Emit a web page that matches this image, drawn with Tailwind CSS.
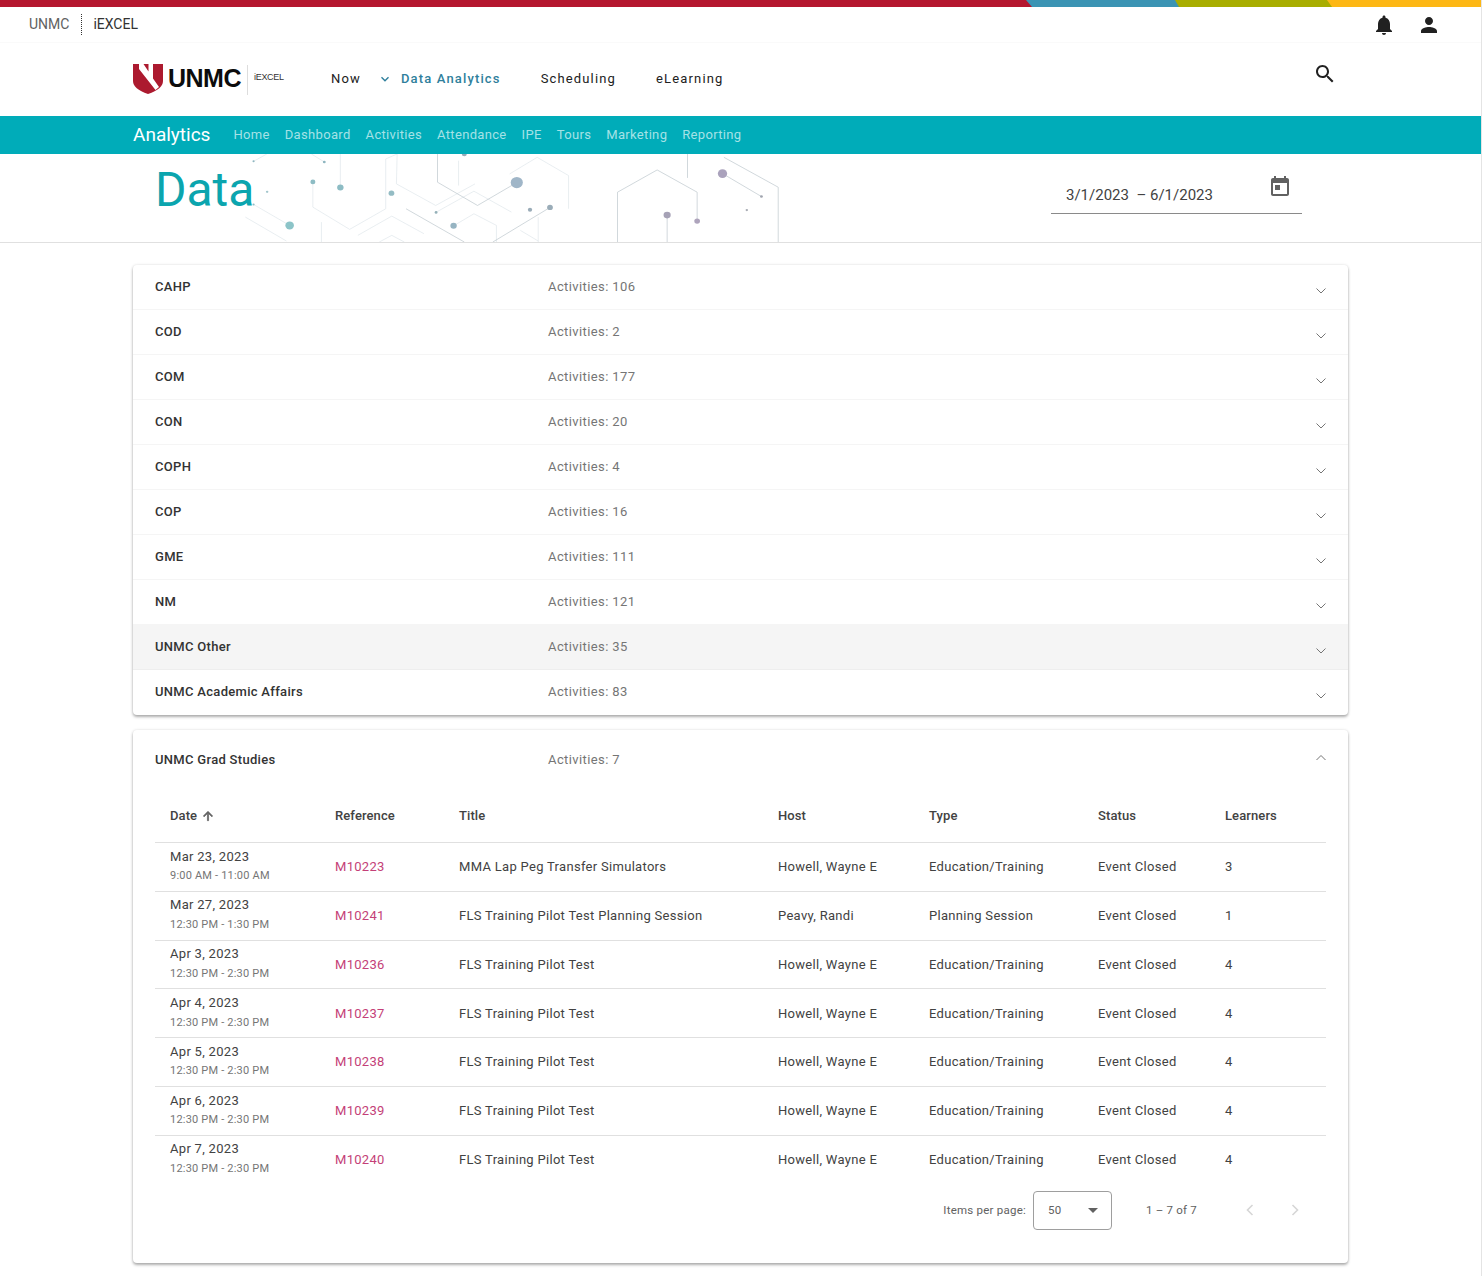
<!DOCTYPE html>
<html lang="en">
<head>
<meta charset="utf-8">
<title>Data</title>
<script src="https://cdn.jsdelivr.net/npm/@tailwindcss/browser@4"></script>
</head>
<body class="bg-white font-['Roboto',sans-serif] text-[#212121]">
<div class="h-[1276px] overflow-hidden border-r border-[#e4e4e4]">
  <svg class="block w-full h-[7px]" viewBox="0 0 1481 7" preserveAspectRatio="none"><rect width="1481" height="7" fill="#fdb714"/><polygon points="0,0 1327,0 1332,7 0,7" fill="#a8ad00"/><polygon points="0,0 1175,0 1179,7 0,7" fill="#3b94b4"/><polygon points="0,0 1026,0 1032,7 0,7" fill="#b5172f"/></svg>

  <header class="h-[36px] flex items-center border-b border-[#fafafa] pl-[29px] pr-[40px] text-[14px]">
    <span class="text-[#616161] leading-none pb-[2px]">UNMC</span>
    <span class="h-[21px] ml-[12px] mr-[11px] border-l border-dotted border-[#333]"></span>
    <span class="text-[#333] leading-none pb-[2px]">iEXCEL</span>
    <div class="ml-auto flex items-center gap-[21px]">
      <svg class="w-[24px] h-[24px]" viewBox="0 0 24 24" fill="#212121"><path d="M12 22c1.1 0 2-.9 2-2h-4c0 1.1.89 2 2 2zm6-6v-5c0-3.07-1.64-5.64-4.5-6.32V4c0-.83-.67-1.5-1.5-1.5s-1.5.67-1.5 1.5v.68C7.63 5.36 6 7.92 6 11v5l-2 2v1h16v-1l-2-2z"/></svg>
      <svg class="w-[24px] h-[24px]" viewBox="0 0 24 24" fill="#212121"><path d="M12 12c2.21 0 4-1.79 4-4s-1.79-4-4-4-4 1.79-4 4 1.79 4 4 4zm0 2c-2.67 0-8 1.34-8 4v2h16v-2c0-2.66-5.33-4-8-4z"/></svg>
    </div>
  </header>

  <nav class="h-[73px] flex items-center pl-[133px] pr-[144px] relative">
    <svg class="w-[30px] h-[30px] mt-[-1px]" viewBox="0 0 30 30"><path d="M0 0H30V17Q30 25 15 30Q0 25 0 17Z" fill="#ac1a2f"/><path d="M6 0H10.5L15.5 7.5V0H20V14.5L26 23 22.5 26 6 5Z" fill="#fff"/></svg>
    <span class="ml-[5px] mb-[2px] font-['Liberation_Sans',sans-serif] font-bold text-[25px] tracking-[-0.5px] text-[#0c0c0c] leading-none">UNMC</span>
    <span class="h-[30px] ml-[6px] border-l border-[#ddd]"></span>
    <span class="ml-[6px] mb-[3px] font-['Liberation_Sans',sans-serif] text-[9px] tracking-[-0.3px] text-[#333] w-[30px]">iEXCEL</span>
    <div class="flex items-center text-[13px] tracking-[1.15px] ml-[47px] mb-[2px]">
      <span class="text-[#212121]">Now</span>
      <svg class="w-[10px] h-[10px] ml-[19px] mr-[11px]" viewBox="0 0 10 10" fill="none" stroke="#2f7f9c" stroke-width="1.4"><path d="M1.5 3.2 5 6.7 8.5 3.2"/></svg>
      <span class="text-[#2f7f9c] font-medium">Data Analytics</span>
      <span class="ml-[40px] text-[#212121]">Scheduling</span>
      <span class="ml-[40px] text-[#212121]">eLearning</span>
    </div>
    <svg class="ml-auto w-[24px] h-[24px] mt-[-12px]" viewBox="0 0 24 24" fill="#212121"><path d="M15.5 14h-.79l-.28-.27C15.41 12.59 16 11.11 16 9.5 16 5.91 13.09 3 9.5 3S3 5.91 3 9.5 5.91 16 9.5 16c1.61 0 3.09-.59 4.23-1.57l.27.28v.79l5 4.99L20.49 19l-4.99-5zm-6 0C7.01 14 5 11.99 5 9.5S7.01 5 9.5 5 14 7.01 14 9.5 11.99 14 9.5 14z"/></svg>
  </nav>

  <div class="h-[38px] bg-[#00acb9] flex items-center pl-[133px] text-[13px] tracking-[0.33px] text-[#a5e2e6] gap-[15px]">
    <span class="text-white text-[19px] tracking-normal mr-[8px]">Analytics</span>
    <span>Home</span><span>Dashboard</span><span>Activities</span><span>Attendance</span><span>IPE</span><span>Tours</span><span>Marketing</span><span>Reporting</span>
  </div>

  <section class="h-[89px] relative border-b border-[#e0e0e0] flex items-center pl-[155px] pr-[179px]">
    <svg class="absolute left-[240px] top-0 w-[560px] h-[88px]" viewBox="0 0 1568 265" preserveAspectRatio="none" fill="none" stroke-width="2">
      <g stroke="#dfe6ea">
        <path d="M38 22 75 0M200 0 236 24M281 0V101M15 190 130 262M330 245 425 187 515 240M390 265 425 245 460 265M228 205V265M440 0 438 90 548 155 658 90M612 20V95M548 176 655 112 760 175M785 230 835 262M835 190V265M718 265V215L655 180 600 215"/>
        <path d="M204 84V160L307 227 408 165V15L440 0M755 60 832 10 920 65V165M38 152 139 215"/>
      </g>
      <g stroke="#bcc6cc">
        <path d="M553 0V85L665 155 775 86M465 165 628 265M708 265 868 161"/>
        <path d="M1057 265V115L1168 48 1280 115V202M1253 0V72M1355 10 1507 100V265M1351 59 1460 128M1196 184V265"/>
      </g>
      <g stroke="none">
        <circle cx="38" cy="22" r="3" fill="#8fb6c0"/><circle cx="236" cy="24" r="4" fill="#8fb6c0"/><circle cx="204" cy="84" r="7" fill="#8dbcc4"/><circle cx="281" cy="101" r="9" fill="#8dbcc4"/><circle cx="76" cy="114" r="3.5" fill="#a2c6cc"/><circle cx="38" cy="152" r="3" fill="#8dbcc4"/><circle cx="139" cy="215" r="12" fill="#8cc4c8"/><circle cx="424" cy="118" r="8" fill="#94bcc4"/><circle cx="775" cy="86" r="17" fill="#a0b6c8"/><circle cx="812" cy="168" r="6" fill="#9aacb8"/><circle cx="868" cy="161" r="8" fill="#9aacb8"/><circle cx="549" cy="176" r="4" fill="#94b0b8"/><circle cx="598" cy="216" r="9" fill="#96b4c2"/><circle cx="628" cy="0" r="7" fill="#96aab8"/>
        <circle cx="1351" cy="59" r="13" fill="#aaa2bc"/><circle cx="1460" cy="128" r="4" fill="#a0a4ae"/><circle cx="1419" cy="169" r="3.5" fill="#a8acb4"/><circle cx="1196" cy="184" r="10" fill="#a6a2b6"/><circle cx="1280" cy="202" r="8" fill="#aea4bc"/>
      </g>
    </svg>
    <h1 class="relative text-[48px] font-normal text-[#0ba5ae] leading-none mb-[16px]">Data</h1>
    <div class="ml-auto relative w-[251px] h-[60px] border-b border-[#8a8a8a] mb-[7px] flex items-end pl-[15px] pb-[6px] text-[15px] text-[#424242] mt-[-22px]">
      <span>3/1/2023&nbsp; –&nbsp;6/1/2023</span>
      <svg class="absolute right-[10px] top-[21px] w-[24px] h-[24px]" viewBox="0 0 24 24" fill="#616161"><path d="M19 3h-1V1h-2v2H8V1H6v2H5c-1.11 0-1.99.9-1.99 2L3 19c0 1.1.89 2 2 2h14c1.1 0 2-.9 2-2V5c0-1.1-.9-2-2-2zm0 16H5V8h14v11zM7 10h5v5H7z"/></svg>
    </div>
  </section>

  <main class="pl-[133px] pr-[133px] pt-[22px] text-[13px] tracking-[0.3px]">
    <div class="rounded-[4px] bg-white shadow-[0_2px_3px_rgba(0,0,0,0.3),0_0_3px_rgba(0,0,0,0.12)]">
      <div class="h-[45px] flex items-center pl-[22px] pr-[21px] border-b border-[#f5f5f5] font-medium"><span class="w-[393px] text-[#333]">CAHP</span><span class="text-[#757575] font-normal tracking-[0.4px]">Activities: 106</span><svg class="ml-auto w-[12px] h-[12px] mt-[7px]" viewBox="0 0 12 12" fill="none" stroke="#757575" stroke-width="1"><path d="M1.5 3.5 6 8 10.5 3.5"/></svg></div>
      <div class="h-[45px] flex items-center pl-[22px] pr-[21px] border-b border-[#f5f5f5] font-medium"><span class="w-[393px] text-[#333]">COD</span><span class="text-[#757575] font-normal tracking-[0.4px]">Activities: 2</span><svg class="ml-auto w-[12px] h-[12px] mt-[7px]" viewBox="0 0 12 12" fill="none" stroke="#757575" stroke-width="1"><path d="M1.5 3.5 6 8 10.5 3.5"/></svg></div>
      <div class="h-[45px] flex items-center pl-[22px] pr-[21px] border-b border-[#f5f5f5] font-medium"><span class="w-[393px] text-[#333]">COM</span><span class="text-[#757575] font-normal tracking-[0.4px]">Activities: 177</span><svg class="ml-auto w-[12px] h-[12px] mt-[7px]" viewBox="0 0 12 12" fill="none" stroke="#757575" stroke-width="1"><path d="M1.5 3.5 6 8 10.5 3.5"/></svg></div>
      <div class="h-[45px] flex items-center pl-[22px] pr-[21px] border-b border-[#f5f5f5] font-medium"><span class="w-[393px] text-[#333]">CON</span><span class="text-[#757575] font-normal tracking-[0.4px]">Activities: 20</span><svg class="ml-auto w-[12px] h-[12px] mt-[7px]" viewBox="0 0 12 12" fill="none" stroke="#757575" stroke-width="1"><path d="M1.5 3.5 6 8 10.5 3.5"/></svg></div>
      <div class="h-[45px] flex items-center pl-[22px] pr-[21px] border-b border-[#f5f5f5] font-medium"><span class="w-[393px] text-[#333]">COPH</span><span class="text-[#757575] font-normal tracking-[0.4px]">Activities: 4</span><svg class="ml-auto w-[12px] h-[12px] mt-[7px]" viewBox="0 0 12 12" fill="none" stroke="#757575" stroke-width="1"><path d="M1.5 3.5 6 8 10.5 3.5"/></svg></div>
      <div class="h-[45px] flex items-center pl-[22px] pr-[21px] border-b border-[#f5f5f5] font-medium"><span class="w-[393px] text-[#333]">COP</span><span class="text-[#757575] font-normal tracking-[0.4px]">Activities: 16</span><svg class="ml-auto w-[12px] h-[12px] mt-[7px]" viewBox="0 0 12 12" fill="none" stroke="#757575" stroke-width="1"><path d="M1.5 3.5 6 8 10.5 3.5"/></svg></div>
      <div class="h-[45px] flex items-center pl-[22px] pr-[21px] border-b border-[#f5f5f5] font-medium"><span class="w-[393px] text-[#333]">GME</span><span class="text-[#757575] font-normal tracking-[0.4px]">Activities: 111</span><svg class="ml-auto w-[12px] h-[12px] mt-[7px]" viewBox="0 0 12 12" fill="none" stroke="#757575" stroke-width="1"><path d="M1.5 3.5 6 8 10.5 3.5"/></svg></div>
      <div class="h-[45px] flex items-center pl-[22px] pr-[21px] border-b border-[#f5f5f5] font-medium"><span class="w-[393px] text-[#333]">NM</span><span class="text-[#757575] font-normal tracking-[0.4px]">Activities: 121</span><svg class="ml-auto w-[12px] h-[12px] mt-[7px]" viewBox="0 0 12 12" fill="none" stroke="#757575" stroke-width="1"><path d="M1.5 3.5 6 8 10.5 3.5"/></svg></div>
      <div class="h-[45px] flex items-center pl-[22px] pr-[21px] border-b border-[#eeeeee] bg-[#f5f5f5] font-medium"><span class="w-[393px] text-[#333]">UNMC Other</span><span class="text-[#757575] font-normal tracking-[0.4px]">Activities: 35</span><svg class="ml-auto w-[12px] h-[12px] mt-[7px]" viewBox="0 0 12 12" fill="none" stroke="#757575" stroke-width="1"><path d="M1.5 3.5 6 8 10.5 3.5"/></svg></div>
      <div class="h-[45px] flex items-center pl-[22px] pr-[21px] pb-[2px] font-medium"><span class="w-[393px] text-[#333]">UNMC Academic Affairs</span><span class="text-[#757575] font-normal tracking-[0.4px]">Activities: 83</span><svg class="ml-auto w-[12px] h-[12px] mt-[9px]" viewBox="0 0 12 12" fill="none" stroke="#757575" stroke-width="1"><path d="M1.5 3.5 6 8 10.5 3.5"/></svg></div>
    </div>

    <div class="mt-[15px] h-[533px] rounded-[4px] bg-white shadow-[0_2px_3px_rgba(0,0,0,0.3),0_0_3px_rgba(0,0,0,0.12)] px-[22px]">
      <div class="h-[59px] flex items-center font-medium"><span class="w-[393px] text-[#333]">UNMC Grad Studies</span><span class="text-[#757575] font-normal tracking-[0.4px]">Activities: 7</span><svg class="ml-auto mr-[-1px] w-[12px] h-[12px] mt-[-3px]" viewBox="0 0 12 12" fill="none" stroke="#757575" stroke-width="1"><path d="M1.5 8 6 3.5 10.5 8"/></svg></div>
      <div class="h-[53px] grid grid-cols-[165px_124px_319px_151px_169px_127px_1fr] items-center pl-[15px] font-medium tracking-[0.1px] text-[#424242]">
        <span class="flex items-center">Date<svg class="w-[14px] h-[14px] ml-[4px]" viewBox="0 0 24 24" fill="#616161" stroke="#616161" stroke-width="1.2"><path d="M4 12l1.41 1.41L11 7.83V20h2V7.83l5.58 5.59L20 12l-8-8-8 8z"/></svg></span><span>Reference</span><span>Title</span><span>Host</span><span>Type</span><span>Status</span><span>Learners</span>
      </div>
      <div class="h-[48.8px] border-t border-[#e0e0e0] grid grid-cols-[165px_124px_319px_151px_169px_127px_1fr] items-center pl-[15px] text-[#424242]"><div class="leading-[19.5px] mt-[-1.5px]"><div>Mar 23, 2023</div><div class="text-[11px] tracking-[0.2px] text-[#757575]">9:00 AM - 11:00 AM</div></div><span class="text-[#c43f78]">M10223</span><span>MMA Lap Peg Transfer Simulators</span><span>Howell, Wayne E</span><span>Education/Training</span><span>Event Closed</span><span>3</span></div>
      <div class="h-[48.8px] border-t border-[#e0e0e0] grid grid-cols-[165px_124px_319px_151px_169px_127px_1fr] items-center pl-[15px] text-[#424242]"><div class="leading-[19.5px] mt-[-1.5px]"><div>Mar 27, 2023</div><div class="text-[11px] tracking-[0.2px] text-[#757575]">12:30 PM - 1:30 PM</div></div><span class="text-[#c43f78]">M10241</span><span>FLS Training Pilot Test Planning Session</span><span>Peavy, Randi</span><span>Planning Session</span><span>Event Closed</span><span>1</span></div>
      <div class="h-[48.8px] border-t border-[#e0e0e0] grid grid-cols-[165px_124px_319px_151px_169px_127px_1fr] items-center pl-[15px] text-[#424242]"><div class="leading-[19.5px] mt-[-1.5px]"><div>Apr 3, 2023</div><div class="text-[11px] tracking-[0.2px] text-[#757575]">12:30 PM - 2:30 PM</div></div><span class="text-[#c43f78]">M10236</span><span>FLS Training Pilot Test</span><span>Howell, Wayne E</span><span>Education/Training</span><span>Event Closed</span><span>4</span></div>
      <div class="h-[48.8px] border-t border-[#e0e0e0] grid grid-cols-[165px_124px_319px_151px_169px_127px_1fr] items-center pl-[15px] text-[#424242]"><div class="leading-[19.5px] mt-[-1.5px]"><div>Apr 4, 2023</div><div class="text-[11px] tracking-[0.2px] text-[#757575]">12:30 PM - 2:30 PM</div></div><span class="text-[#c43f78]">M10237</span><span>FLS Training Pilot Test</span><span>Howell, Wayne E</span><span>Education/Training</span><span>Event Closed</span><span>4</span></div>
      <div class="h-[48.8px] border-t border-[#e0e0e0] grid grid-cols-[165px_124px_319px_151px_169px_127px_1fr] items-center pl-[15px] text-[#424242]"><div class="leading-[19.5px] mt-[-1.5px]"><div>Apr 5, 2023</div><div class="text-[11px] tracking-[0.2px] text-[#757575]">12:30 PM - 2:30 PM</div></div><span class="text-[#c43f78]">M10238</span><span>FLS Training Pilot Test</span><span>Howell, Wayne E</span><span>Education/Training</span><span>Event Closed</span><span>4</span></div>
      <div class="h-[48.8px] border-t border-[#e0e0e0] grid grid-cols-[165px_124px_319px_151px_169px_127px_1fr] items-center pl-[15px] text-[#424242]"><div class="leading-[19.5px] mt-[-1.5px]"><div>Apr 6, 2023</div><div class="text-[11px] tracking-[0.2px] text-[#757575]">12:30 PM - 2:30 PM</div></div><span class="text-[#c43f78]">M10239</span><span>FLS Training Pilot Test</span><span>Howell, Wayne E</span><span>Education/Training</span><span>Event Closed</span><span>4</span></div>
      <div class="h-[48.8px] border-t border-[#e0e0e0] grid grid-cols-[165px_124px_319px_151px_169px_127px_1fr] items-center pl-[15px] text-[#424242]"><div class="leading-[19.5px] mt-[-1.5px]"><div>Apr 7, 2023</div><div class="text-[11px] tracking-[0.2px] text-[#757575]">12:30 PM - 2:30 PM</div></div><span class="text-[#c43f78]">M10240</span><span>FLS Training Pilot Test</span><span>Howell, Wayne E</span><span>Education/Training</span><span>Event Closed</span><span>4</span></div>
      <div class="flex items-center justify-end mt-[7.4px] pr-[25px] text-[11.5px] text-[#616161]">
        <span class="tracking-[0.23px]">Items per page:</span>
        <div class="ml-[7px] w-[79px] h-[39px] rounded-[4px] border border-[#9e9e9e] flex items-center pl-[14px] pr-[13px]"><span>50</span><svg class="ml-auto w-[10px] h-[5px]" viewBox="0 0 10 5" fill="#616161"><path d="M0 0H10L5 5Z"/></svg></div>
        <span class="ml-[34px] tracking-[0.2px] w-[78px]">1 – 7 of 7</span>
        <svg class="ml-[20px] w-[12px] h-[14px]" viewBox="0 0 12 14" fill="none" stroke="#d6d6d6" stroke-width="1.6"><path d="M8.5 2 3.5 7 8.5 12"/></svg>
        <svg class="ml-[33px] w-[12px] h-[14px]" viewBox="0 0 12 14" fill="none" stroke="#d6d6d6" stroke-width="1.6"><path d="M3.5 2 8.5 7 3.5 12"/></svg>
      </div>
    </div>
  </main>
</div>
</body>
</html>
